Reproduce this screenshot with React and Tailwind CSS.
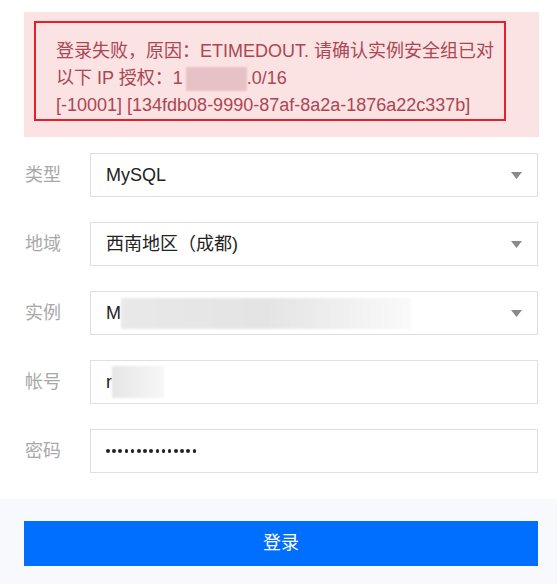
import React from "react";

const FONT = { fontFamily: '"Liberation Sans", "Noto Sans CJK SC", sans-serif' };

const Arrow = () => (
  <svg width="11" height="7" viewBox="0 0 11 7" className="shrink-0">
    <path d="M0 0 L11 0 L5.5 7 Z" fill="#8a8a8a" />
  </svg>
);

const Row = ({ label, children }) => (
  <div className="flex items-center h-[44px]">
    <div className="w-[66px] shrink-0 text-[18px] text-[#a8a8a8] leading-none pl-[1px]">
      {label}
    </div>
    <div className="flex-1 h-full border border-[#dcdfe4] bg-white flex items-center pl-[15px] pr-[15px] text-[18px] text-[#222]">
      {children}
    </div>
  </div>
);

const App = () => {
  return (
    <div className="w-[557px] h-[584px] bg-white overflow-hidden" style={FONT}>
      <div className="pl-[24px] pr-[18px] pt-[12px]">
        {/* error banner */}
        <div className="bg-[#fce3e3] pt-[9px] pl-[10px] pr-[33px] pb-[16px]">
          <div className="border-2 border-[#e4202c] pt-[15px] pb-[0px] pl-[20px] text-[18px] leading-[27px] text-[#ab4654] whitespace-nowrap">
            <div>登录失败，原因：ETIMEDOUT. 请确认实例安全组已对</div>
            <div className="flex items-center">
              <span>以下 IP 授权：1</span>
              <span className="inline-block w-[61px] h-[24px] bg-[#e6c1c6] ml-[3px] blur-[1px]" />
              <span>.0/16</span>
            </div>
            <div>[-10001] [134fdb08-9990-87af-8a2a-1876a22c337b]</div>
          </div>
        </div>

        {/* form */}
        <div className="mt-[16px] flex flex-col gap-[25px] pr-[1px]">
          <Row label="类型">
            <span className="flex-1">MySQL</span>
            <Arrow />
          </Row>
          <Row label="地域">
            <span className="flex-1">西南地区（成都)</span>
            <Arrow />
          </Row>
          <Row label="实例">
            <div className="flex-1 flex items-center">
              <span>M</span>
              <span className="inline-block w-[290px] h-[31px] bg-gradient-to-r from-[#e9e9e9] via-[#e4e4e4] to-[#fafafa] blur-[1px]" />
            </div>
            <Arrow />
          </Row>
          <Row label="帐号">
            <span>r</span>
            <span className="inline-block w-[52px] h-[32px] bg-gradient-to-r from-[#e6e6e6] to-[#f7f7f7] blur-[1px]" />
          </Row>
          <Row label="密码">
            <div className="flex items-center gap-[2.6px]">
              {Array.from({ length: 15 }).map((_, i) => (
                <span key={i} className="w-[3.6px] h-[3.6px] rounded-full bg-[#222]" />
              ))}
            </div>
          </Row>
        </div>
      </div>

      {/* footer */}
      <div className="mt-[26px] bg-[#f7f9fc] pt-[22px] pb-[20px] pl-[24px] pr-[19px]">
        <button className="w-full h-[45px] bg-[#006eff] text-white text-[18px] flex items-center justify-center">
          登录
        </button>
      </div>
    </div>
  );
};

export default App;
